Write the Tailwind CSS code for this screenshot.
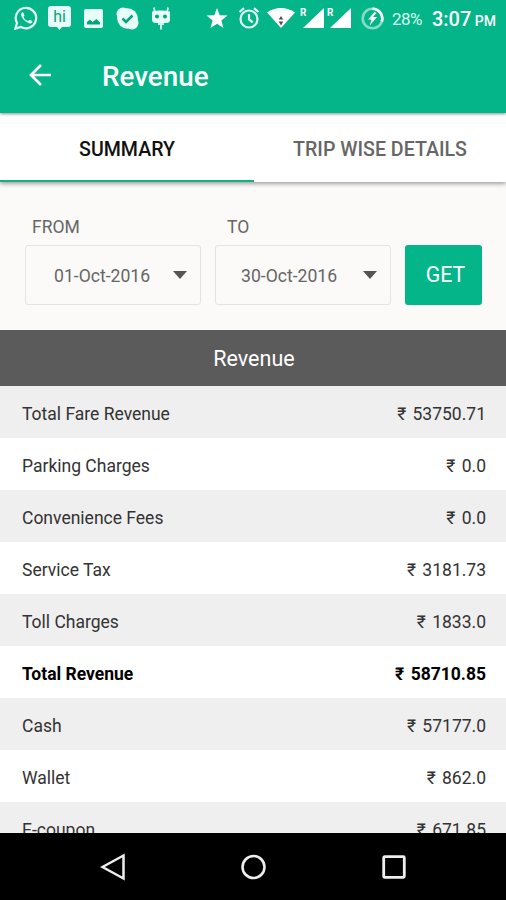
<!DOCTYPE html>
<html lang="en">
<head>
<meta charset="utf-8">
<title>Revenue</title>
<script src="https://cdn.jsdelivr.net/npm/@tailwindcss/browser@4"></script>
</head>
<body class="bg-black font-['Roboto','Noto_Sans',sans-serif]">
<div class="w-[506px] h-[900px] overflow-hidden flex flex-col bg-[#fbfaf8]">
  <!-- Status bar and toolbar -->
  <header class="relative z-20 h-[113px] shrink-0 bg-[#03b588] text-white shadow-[0_1px_3px_rgba(0,0,0,0.45)]">
    <div class="h-9 flex items-center pl-[14px] pr-[10px]">
      <svg class="w-6 h-6 shrink-0" viewBox="0 0 24 24" fill="none" stroke="#e8fff8" stroke-width="2.200"><path d="M1.400 22.600 3 17A10.200 10.200 0 1 1 7 21Z"/><path d="M8.300 6.200c-2.900 2 .2 6.500 2.600 8.500s6 4.300 7.400 1.200c.3-.9-.2-1.200-2.600-2.200-.9-.3-1.300 1.500-2 1.300-1.900-.7-3.300-2-4.200-3.900-.2-.6 1.200-1.100.9-1.900-.8-2.200-1-3.100-2.100-3Z" fill="#e8fff8" stroke="none"/></svg>
      <div class="relative ml-[10px] w-[23px] h-6 shrink-0">
        <svg class="absolute inset-0" width="23" height="24" viewBox="0 0 23 24" fill="#e8fff8"><path d="M3 0h17a3 3 0 0 1 3 3v15a3 3 0 0 1-3 3h-6l-2.500 3L9 21H3a3 3 0 0 1-3-3V3a3 3 0 0 1 3-3Z"/></svg>
        <span class="absolute inset-x-0 top-[1px] text-center text-[16px] leading-[20px] text-[#03a47c]">hi</span>
      </div>
      <svg class="ml-[13px] w-[19px] h-[19px] shrink-0" viewBox="0 0 19 19"><rect width="19" height="19" rx="2" fill="#e8fff8"/><path d="M3 15.500v-2.500l3-2.500 2.500 2.500 4-3 3.500 3.500v2Z" fill="#03a47c"/></svg>
      <svg class="ml-[13px] w-[23px] h-[23px] shrink-0" viewBox="0 0 23 23"><circle cx="7" cy="7" r="6.500" fill="#e8fff8"/><circle cx="16" cy="16" r="6.500" fill="#e8fff8"/><circle cx="11.500" cy="11.500" r="10.300" fill="#e8fff8"/><path d="m6.500 11.500 3.500 3.500 6.500-6.500" fill="none" stroke="#03a47c" stroke-width="2.500"/></svg>
      <svg class="ml-3 w-5 h-[23px] shrink-0" viewBox="0 0 20 23"><path d="M4 6 3 .5M16 6l1-5.500M10 15v7.500M8 16v2M12 16v2" stroke="#e8fff8" stroke-width="1.700" fill="none"/><path d="M1 4.500c3 0 3-1 9-1s6 1 9 1v8q0 3.500-4 3.500H5q-4 0-4-3.500Z" fill="#e8fff8"/><circle cx="6" cy="9.500" r="2" fill="#03a47c"/><circle cx="14" cy="9.500" r="2" fill="#03a47c"/></svg>
      <svg class="ml-[35px] w-[22px] h-[21px] shrink-0" viewBox="0 0 22 21" fill="#fff"><path d="m11 0 2.700 7.300 7.800.3-6.100 4.900 2.100 7.500L11 15.700 4.500 20l2.100-7.500L.5 7.600l7.800-.3Z"/></svg>
      <svg class="ml-[10px] w-[22px] h-[22px] shrink-0" viewBox="0 0 22 22" fill="none" stroke="#e8fff8" stroke-width="2.200"><circle cx="11" cy="12" r="8.500"/><path d="M11 7v5.500l3.800 2.800M1.500 5 6 1.200M20.500 5 16 1.200"/></svg>
      <svg class="ml-[7px] w-7 h-5 shrink-0" viewBox="0 0 28 20"><path d="M0 4.500C8-1.500 20-1.500 28 4.500L14 20Z" fill="#fff"/><path d="m14 8 2.300 3.500h-4.600Zm0 9.500 2.300-4h-4.600Z" fill="#5b4750"/></svg>
      <div class="relative ml-[6px] w-[23px] h-5 shrink-0">
        <svg class="absolute inset-0" width="23" height="20" viewBox="0 0 23 20"><path d="M23 0v20H2Z" fill="#fff"/></svg>
        <span class="absolute -left-px -top-[1px] text-[10px] leading-[12px] font-bold">R</span>
      </div>
      <div class="relative ml-1 w-[23px] h-5 shrink-0">
        <svg class="absolute inset-0" width="23" height="20" viewBox="0 0 23 20"><path d="M23 0v20H2Z" fill="#fff"/></svg>
        <span class="absolute -left-px -top-[1px] text-[10px] leading-[12px] font-bold">R</span>
      </div>
      <svg class="ml-[10px] w-[23px] h-[23px] shrink-0" viewBox="0 0 23 23"><circle cx="11.500" cy="11.500" r="9.800" fill="none" stroke="#84dcc6" stroke-width="2.600"/><path d="M11.500 1.700a9.800 9.800 0 0 1 9.300 12.800" fill="none" stroke="#fff" stroke-width="2.600"/><path d="m13.500 5-6.500 7.500h3.500l-1.700 6 7.200-8.500h-4l3.500-4Z" fill="#fff"/></svg>
      <span class="ml-2 w-[33px] text-[17px] tracking-[-0.600px] leading-6 text-[#d9fff3] mt-[1px]">28%</span>
      <span class="ml-[7px] w-[41px] text-[20px] leading-6 font-medium mt-[2px]">3:07</span>
      <span class="ml-[2px] text-[14px] leading-6 font-medium mt-[5px]">PM</span>
    </div>
    <div class="h-[77px] flex items-center pl-7">
      <svg class="w-6 h-6" viewBox="0 0 24 24" fill="none" stroke="#fff" stroke-width="2.700"><path d="M23 12H3M13 2 3 12l10 10"/></svg>
      <h1 class="ml-[50px] mt-1 text-[27.800px] leading-8 font-medium">Revenue</h1>
    </div>
  </header>

  <!-- Tabs -->
  <nav class="relative z-10 h-[69px] shrink-0 flex bg-white text-[19.600px] shadow-[0_2px_4px_rgba(0,0,0,0.35)]">
    <div class="w-[254px] flex items-center justify-center border-b-2 border-[#12b083] pt-[6px] font-medium text-[#111]">SUMMARY</div>
    <div class="flex-1 flex items-center justify-center pt-1 font-medium text-[#666]">TRIP WISE DETAILS</div>
  </nav>

  <!-- Date range -->
  <section class="h-[148px] shrink-0 flex items-end pb-[25px] pl-[25px] text-[#666]">
    <div class="w-[176px]">
      <div class="pl-[7px] text-[17.500px] leading-5 mb-2">FROM</div>
      <div class="h-[60px] border border-[#e3e3e1] rounded-[3px] flex items-center justify-between pl-[28px] pr-[13px] text-[17.600px]"><span class="pt-[2px]">01-Oct-2016</span><svg width="14" height="8" viewBox="0 0 14 8"><path d="M0 0h14L7 8Z" fill="#555"/></svg></div>
    </div>
    <div class="ml-[14px] w-[176px]">
      <div class="pl-[12px] text-[17.500px] leading-5 mb-2">TO</div>
      <div class="h-[60px] border border-[#e3e3e1] rounded-[3px] flex items-center justify-between pl-[25px] pr-[13px] text-[17.600px]"><span class="pt-[2px]">30-Oct-2016</span><svg width="14" height="8" viewBox="0 0 14 8"><path d="M0 0h14L7 8Z" fill="#555"/></svg></div>
    </div>
    <button class="ml-[14px] w-[77px] h-[60px] rounded-[3px] bg-[#03b588] text-white text-[21.300px] pl-1">GET</button>
  </section>

  <!-- Revenue table -->
  <h2 class="h-[56px] shrink-0 bg-[#5b5b5b] text-white text-[21.500px] flex items-center justify-center pl-[2px] pt-[2px]">Revenue</h2>
  <div class="flex-1 min-h-0 overflow-hidden text-[17.500px] text-[#333] [&>div]:h-[52px] [&>div]:pl-[22px] [&>div]:pr-5 [&>div]:pt-[5px] [&>div]:flex [&>div]:items-center [&>div]:justify-between [&>div]:bg-white [&>div:nth-child(odd)]:bg-[#efefef] [&_span:last-child]:[word-spacing:2px]">
    <div><span>Total Fare Revenue</span><span>₹ 53750.71</span></div>
    <div><span>Parking Charges</span><span>₹ 0.0</span></div>
    <div><span>Convenience Fees</span><span>₹ 0.0</span></div>
    <div><span>Service Tax</span><span>₹ 3181.73</span></div>
    <div><span>Toll Charges</span><span>₹ 1833.0</span></div>
    <div class="font-bold text-black"><span>Total Revenue</span><span>₹ 58710.85</span></div>
    <div><span>Cash</span><span>₹ 57177.0</span></div>
    <div><span>Wallet</span><span>₹ 862.0</span></div>
    <div><span>E-coupon</span><span>₹ 671.85</span></div>
  </div>

  <!-- Navigation bar -->
  <footer class="h-[67px] shrink-0 bg-black flex items-center justify-between pl-[100px] pr-[100px]">
    <svg width="26" height="28" viewBox="0 0 26 28" fill="none" stroke="#eee" stroke-width="2.500"><path d="M23.500 2.500v23L2.500 14Z"/></svg>
    <svg width="26" height="26" viewBox="0 0 26 26" fill="none" stroke="#eee" stroke-width="2.600"><circle cx="12.500" cy="13" r="11"/></svg>
    <svg width="24" height="24" viewBox="0 0 24 24" fill="none" stroke="#eee" stroke-width="2.800"><rect x="1.700" y="1.700" width="20.600" height="20.600" rx="1"/></svg>
  </footer>
</div>
</body>
</html>
